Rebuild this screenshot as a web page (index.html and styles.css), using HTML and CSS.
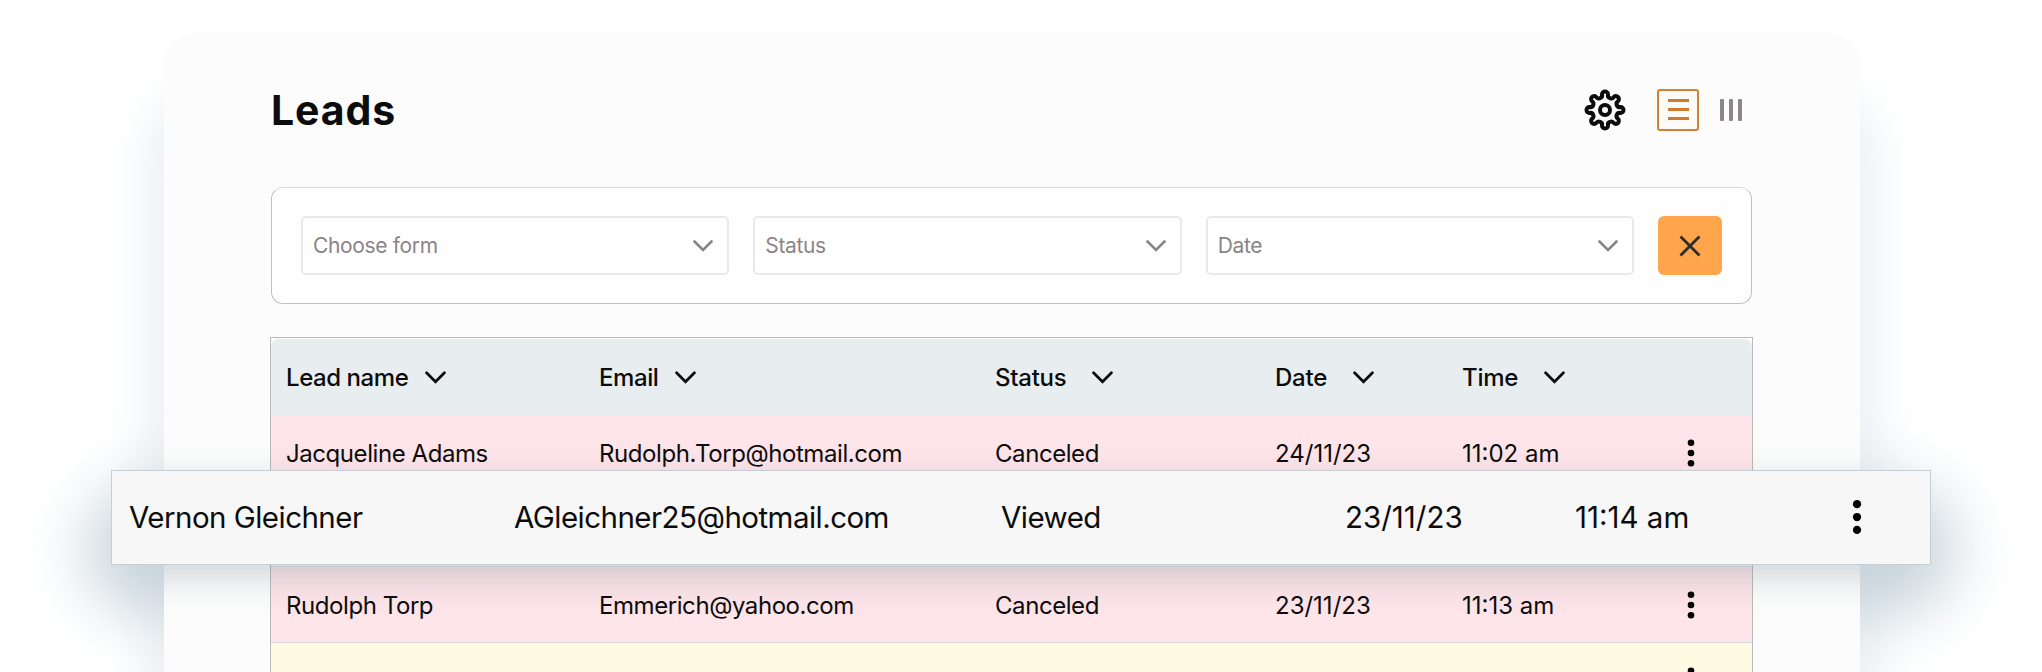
FILE: index.html
```html
<!DOCTYPE html>
<html lang="en">
<head>
    <meta charset="UTF-8">
    <meta name="viewport" content="width=device-width, initial-scale=1.0">
    <title>Leads</title>
    <link rel="stylesheet" href="styles.css">
</head>
<body>
    <svg class="sprite">
        <symbol id="chevron" viewBox="0 0 20 12">
            <path d="M1.5 1.5L10 10L18.5 1.5" fill="none" stroke="currentColor" stroke-width="2.6" stroke-linecap="round"/>
        </symbol>
        <symbol id="dots" viewBox="0 0 8 32">
            <circle cx="4" cy="5.7" r="3.3"/>
            <circle cx="4" cy="16" r="3.3"/>
            <circle cx="4" cy="26.3" r="3.3"/>
        </symbol>
    </svg>

    <div class="card-glow"></div>
    <div class="row-glow"></div>

    <main class="card">
        <header class="card-header">
            <h1>Leads</h1>
            <div class="tools">
                <svg class="gear" viewBox="-21 -21 42 42">
                    <path d="M-3 -15.5A3 3 0 0 1 3 -15.5A3.2 3.2 0 0 0 8.84 -13.08A3 3 0 0 1 13.08 -8.84A3.2 3.2 0 0 0 15.5 -3A3 3 0 0 1 15.5 3A3.2 3.2 0 0 0 13.08 8.84A3 3 0 0 1 8.84 13.08A3.2 3.2 0 0 0 3 15.5A3 3 0 0 1 -3 15.5A3.2 3.2 0 0 0 -8.84 13.08A3 3 0 0 1 -13.08 8.84A3.2 3.2 0 0 0 -15.5 3A3 3 0 0 1 -15.5 -3A3.2 3.2 0 0 0 -13.08 -8.84A3 3 0 0 1 -8.84 -13.08A3.2 3.2 0 0 0 -3 -15.5Z"/>
                    <circle r="5"/>
                </svg>
                <div class="view-list">
                    <span></span>
                    <span></span>
                    <span></span>
                </div>
                <div class="view-board">
                    <span></span>
                    <span></span>
                    <span></span>
                </div>
            </div>
        </header>

        <section class="filters">
            <div class="select">Choose form <svg><use href="#chevron"/></svg></div>
            <div class="select">Status <svg><use href="#chevron"/></svg></div>
            <div class="select">Date <svg><use href="#chevron"/></svg></div>
            <button class="clear-btn">
                <svg viewBox="0 0 22 22"><path d="M1.5 1.5L20.5 20.5M20.5 1.5L1.5 20.5"/></svg>
            </button>
        </section>

        <section class="table">
            <div class="row head">
                <div>Lead name <svg><use href="#chevron"/></svg></div>
                <div>Email <svg><use href="#chevron"/></svg></div>
                <div class="wide">Status <svg><use href="#chevron"/></svg></div>
                <div class="wide">Date <svg><use href="#chevron"/></svg></div>
                <div class="wide">Time <svg><use href="#chevron"/></svg></div>
            </div>
            <div class="row canceled">
                <div>Jacqueline Adams</div>
                <div>Rudolph.Torp@hotmail.com</div>
                <div>Canceled</div>
                <div class="num">24/11/23</div>
                <div class="num">11:02 am</div>
                <svg class="dots"><use href="#dots"/></svg>
            </div>
            <div class="row"></div>
            <div class="row canceled">
                <div>Rudolph Torp</div>
                <div>Emmerich@yahoo.com</div>
                <div>Canceled</div>
                <div class="num">23/11/23</div>
                <div class="num">11:13 am</div>
                <svg class="dots"><use href="#dots"/></svg>
            </div>
            <div class="row pending">
                <div></div>
                <div></div>
                <div></div>
                <div></div>
                <div></div>
                <svg class="dots"><use href="#dots"/></svg>
            </div>
        </section>
    </main>

    <!-- Row lifted out of the table -->
    <div class="lifted">
        <div>Vernon Gleichner</div>
        <div>AGleichner25@hotmail.com</div>
        <div>Viewed</div>
        <div class="num">23/11/23</div>
        <div class="num">11:14 am</div>
        <svg class="dots"><use href="#dots"/></svg>
    </div>
</body>
</html>
```
FILE: styles.css
```css
* {
    box-sizing: border-box;
}

body {
    position: relative;
    width: 2042px;
    height: 672px;
    margin: 0;
    padding: 32px 182px 0 164px;
    overflow: hidden;
    background: #fff;
    color: #0c0c0c;
    font-family: Inter, "Liberation Sans", sans-serif;
    font-size: 24px;
}

.sprite {
    position: absolute;
    width: 0;
    height: 0;
}

.card {
    position: relative;
    height: 640px;
    padding: 0 108px 0 107px;
    overflow: hidden;
    background: #fcfcfc;
    border-radius: 34px 34px 0 0;
}

.card-header {
    display: flex;
    align-items: center;
    justify-content: space-between;
    height: 155px;
}

h1 {
    margin: 0;
    font-size: 41px;
    font-weight: 700;
    letter-spacing: 0.9px;
}

.tools {
    display: flex;
    align-items: center;
    padding-right: 10px;
}

.gear {
    width: 42px;
    height: 42px;
    margin-right: 31px;
    fill: none;
    stroke: #0c0c0c;
    stroke-width: 4;
}

.view-list {
    display: flex;
    flex-direction: column;
    align-items: center;
    justify-content: center;
    gap: 6px;
    width: 42px;
    height: 42px;
    margin-right: 21px;
    border: 2px solid #d08038;
    border-radius: 3px;
    background: #fdfbf7;
}

.view-list span {
    width: 21px;
    height: 3px;
    background: #cf7a2c;
}

.view-board {
    display: flex;
    gap: 5px;
}

.view-board span {
    width: 4px;
    height: 22px;
    border-radius: 1px;
    background: #8c8688;
}

.filters {
    display: flex;
    gap: 24px;
    height: 117px;
    padding: 28px 29px;
    border: 1px solid #c0c0c0;
    border-top-color: #d8d8d8;
    border-radius: 12px;
    background: #fefefe;
}

.select {
    display: flex;
    flex: 1;
    align-items: center;
    justify-content: space-between;
    padding: 0 14px 0 10px;
    border: 2px solid #e8eaea;
    border-radius: 5px;
    background: #fff;
    color: #8a8486;
    font-size: 21px;
    letter-spacing: -0.35px;
}

.select svg {
    width: 20px;
    height: 12px;
}

.clear-btn {
    display: flex;
    align-items: center;
    justify-content: center;
    width: 64px;
    padding: 0;
    border: none;
    border-radius: 6px;
    background: #ffa54c;
}

.clear-btn svg {
    width: 22px;
    height: 22px;
    stroke: #2c2c2c;
    stroke-width: 2.8;
}

.table {
    margin: 33px -1px 0;
    padding-top: 1px;
    border: 1px solid #b9b9bb;
}

.row {
    display: grid;
    grid-template-columns: 313px 396px 280px 187px 225px 8px;
    align-items: center;
    height: 76px;
    padding: 1px 0 0 15px;
    border-bottom: 1px solid #d5d9de;
    letter-spacing: -0.43px;
}

.head {
    padding-top: 0;
    border-bottom: none;
    border-radius: 8px 8px 0 0;
    background: #e8eef0;
    font-weight: 500;
}

.head div {
    display: flex;
    align-items: center;
    gap: 17px;
}

.head .wide {
    gap: 26px;
    letter-spacing: -0.25px;
}

.head svg {
    width: 21px;
    height: 13px;
}

.row .num,
.lifted .num {
    letter-spacing: 0;
}

.canceled {
    background: #fee5ea;
}

.pending {
    background: #fffbe2;
}

.dots {
    width: 8px;
    height: 32px;
}

/* Blue haze behind the card and on both sides of the lifted row */
.card-glow {
    position: absolute;
    left: 144px;
    top: 80px;
    width: 1736px;
    height: 680px;
    border-radius: 80px;
    background: #edf2f5;
    filter: blur(20px);
}

.row-glow {
    position: absolute;
    left: 86px;
    top: 484px;
    width: 1870px;
    height: 130px;
    border-radius: 65px;
    background: #c6d3da;
    filter: blur(32px);
}

.lifted {
    position: absolute;
    left: 111px;
    top: 470px;
    display: grid;
    grid-template-columns: 385px 487px 344px 230px 277px 10px;
    align-items: center;
    width: 1820px;
    height: 95px;
    padding: 0 0 1px 17px;
    border: 1px solid #c5ced4;
    background: #f7f7f7;
    font-size: 29.5px;
    letter-spacing: -0.53px;
}

/* Softer shadow over the card only */
.card::after {
    content: "";
    position: absolute;
    left: -53px;
    top: 438px;
    width: 1802px;
    height: 95px;
    box-shadow: 0 12px 36px rgba(90, 110, 120, 0.27);
}

.lifted .dots {
    width: 10px;
    height: 40px;
}
```
